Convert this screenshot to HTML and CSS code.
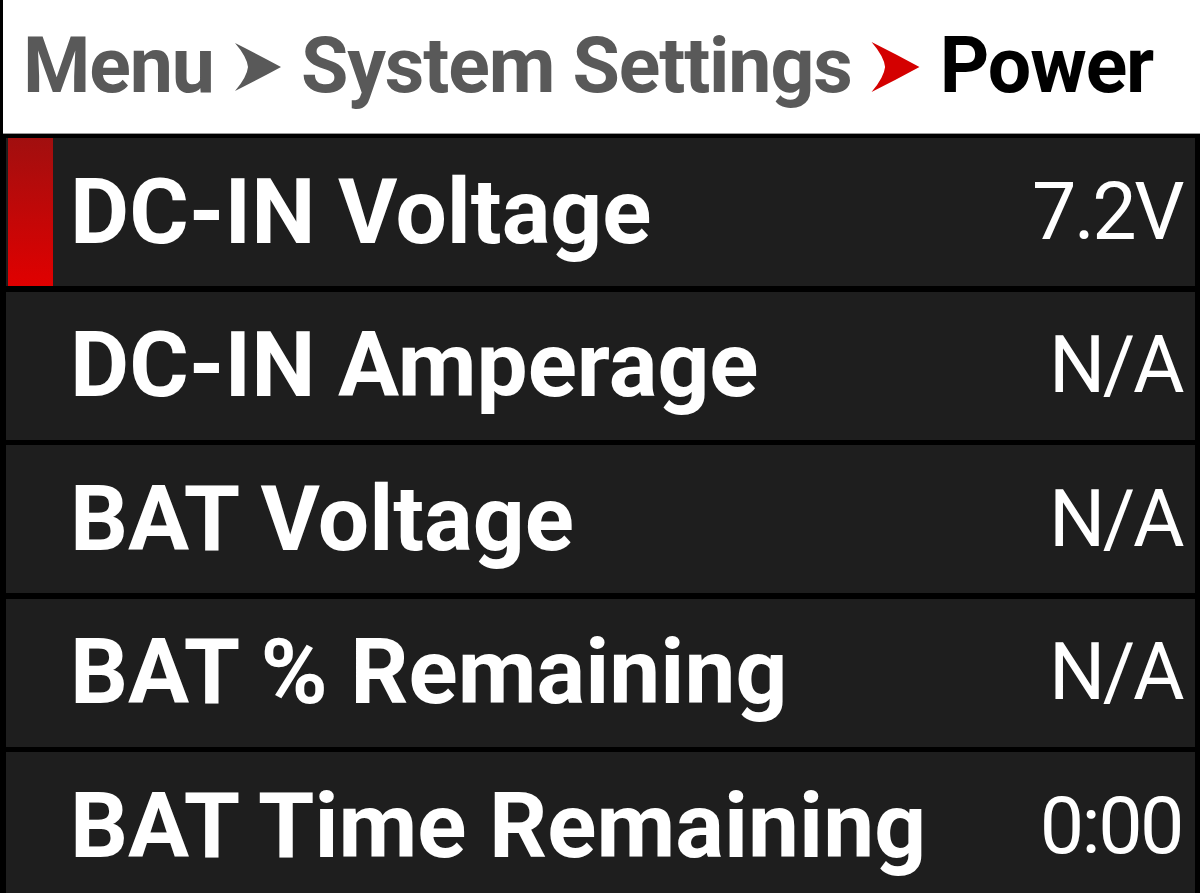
FILE: index.html
```html
<!DOCTYPE html>
<html lang="en">
<head>
  <meta charset="UTF-8">
  <title>Power - System Settings</title>
  <link rel="stylesheet" href="styles.css">
</head>
<body>

  <div class="header">
    <span class="crumb">Menu</span>
    <svg class="chev" viewBox="0 0 46 48"><path d="M0 0 Q24 12 46 24 Q24 36 0 48 Q12 34 13 24 Q12 14 0 0 Z" fill="#595959"/></svg>
    <span class="crumb">System Settings</span>
    <svg class="chev chev-red" viewBox="0 0 46 48"><path d="M0 0 Q24 12 46 24 Q24 36 0 48 Q12 34 13 24 Q12 14 0 0 Z" fill="#d40000"/></svg>
    <span class="crumb current">Power</span>
  </div>

  <div class="list">
    <div class="row selected">
      <span class="label">DC-IN Voltage</span>
      <span class="value">7.2V</span>
    </div>
    <div class="row">
      <span class="label">DC-IN Amperage</span>
      <span class="value">N/A</span>
    </div>
    <div class="row">
      <span class="label">BAT Voltage</span>
      <span class="value">N/A</span>
    </div>
    <div class="row">
      <span class="label">BAT % Remaining</span>
      <span class="value">N/A</span>
    </div>
    <div class="row">
      <span class="label">BAT Time Remaining</span>
      <span class="value">0:00</span>
    </div>
  </div>

</body>
</html>
```

FILE: styles.css
```css
body {
  margin: 0;
  background-color: #000;
  font-family: Roboto, 'Noto Sans', sans-serif;
  height: 893px;
  overflow: hidden;
}

.header {
  height: 134px;
  margin-left: 3px;
  background-color: #fff;
  border-bottom: 1px solid #9a9a9a;
  display: flex;
  align-items: center;
  padding-left: 20px;
  box-sizing: border-box;
}

.crumb {
  font-size: 77px;
  font-weight: bold;
  color: #595959;
  line-height: 1;
  letter-spacing: -1.1px;
}

.crumb.current {
  color: #000;
}

.chev {
  width: 46px;
  height: 48px;
  margin: 0 20px 0 21px;
}

.chev-red {
  width: 49px;
  height: 50px;
  margin: 0 20px 0 19px;
}

.list {
  display: flex;
  flex-direction: column;
  gap: 5.5px;
  padding: 4px 5px 0 6px;
}

.row {
  position: relative;
  height: 148px;
  flex-shrink: 0;
  background-color: #1e1e1e;
  display: flex;
  align-items: center;
  justify-content: space-between;
  padding: 0 13px 0 64px;
}

.row.selected::before {
  content: "";
  position: absolute;
  left: 2px;
  top: 0;
  bottom: 0;
  width: 45px;
  background: linear-gradient(#a10f0f, #e00000);
}

.label {
  font-size: 91px;
  font-weight: bold;
  color: #fff;
  line-height: 1;
}

.value {
  font-size: 79px;
  font-weight: normal;
  color: #fff;
  line-height: 1;
  letter-spacing: -2.5px;
}
```
